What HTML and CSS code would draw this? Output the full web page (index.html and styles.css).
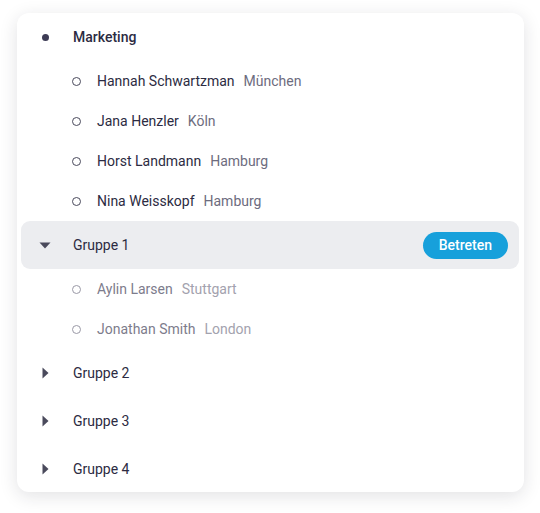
FILE: index.html
```html
<!DOCTYPE html>
<html lang="de">
<head>
  <meta charset="UTF-8">
  <meta name="viewport" content="width=device-width, initial-scale=1.0">
  <title>Gruppen</title>
  <link rel="stylesheet" href="styles.css">
</head>
<body>
  <div class="card">
    <div class="group">
      <span class="icon"><span class="dot"></span></span>
      <span class="group-name bold">Marketing</span>
    </div>
    <div class="person">
      <span class="icon"><span class="ring"></span></span>
      <span class="name">Hannah Schwartzman</span>
      <span class="city">München</span>
    </div>
    <div class="person">
      <span class="icon"><span class="ring"></span></span>
      <span class="name">Jana Henzler</span>
      <span class="city">Köln</span>
    </div>
    <div class="person">
      <span class="icon"><span class="ring"></span></span>
      <span class="name">Horst Landmann</span>
      <span class="city">Hamburg</span>
    </div>
    <div class="person">
      <span class="icon"><span class="ring"></span></span>
      <span class="name">Nina Weisskopf</span>
      <span class="city">Hamburg</span>
    </div>

    <div class="group active">
      <span class="icon">
        <svg width="12" height="8" viewBox="0 0 12 8"><path d="M0.5 1.5h11L6 7.5z" fill="#4a4a5c"/></svg>
      </span>
      <span class="group-name">Gruppe 1</span>
      <button class="join">Betreten</button>
    </div>
    <div class="person muted">
      <span class="icon"><span class="ring"></span></span>
      <span class="name">Aylin Larsen</span>
      <span class="city">Stuttgart</span>
    </div>
    <div class="person muted">
      <span class="icon"><span class="ring"></span></span>
      <span class="name">Jonathan Smith</span>
      <span class="city">London</span>
    </div>

    <div class="group">
      <span class="icon">
        <svg width="8" height="12" viewBox="0 0 8 12"><path d="M1.5 0.5v11L7.5 6z" fill="#4a4a5c"/></svg>
      </span>
      <span class="group-name">Gruppe 2</span>
    </div>
    <div class="group">
      <span class="icon">
        <svg width="8" height="12" viewBox="0 0 8 12"><path d="M1.5 0.5v11L7.5 6z" fill="#4a4a5c"/></svg>
      </span>
      <span class="group-name">Gruppe 3</span>
    </div>
    <div class="group">
      <span class="icon">
        <svg width="8" height="12" viewBox="0 0 8 12"><path d="M1.5 0.5v11L7.5 6z" fill="#4a4a5c"/></svg>
      </span>
      <span class="group-name">Gruppe 4</span>
    </div>
  </div>
</body>
</html>
```

FILE: styles.css
```css
body {
  margin: 0;
  padding: 13px 16px 21px 17px;
  background: #ffffff;
  font-family: Roboto, 'Noto Sans', sans-serif;
  font-size: 14px;
  color: #2c2b42;
}
.card {
  width: 507px;
  height: 479px;
  box-sizing: border-box;
  padding: 0 5px 0 4px;
  background: #ffffff;
  border-radius: 12px;
  box-shadow: 0 4px 18px rgba(30, 30, 50, 0.13);
}
.group {
  display: flex;
  align-items: center;
  height: 48px;
  border-radius: 9px;
}
.group .icon {
  width: 48px;
  margin-right: 4px;
  display: flex;
  justify-content: center;
}
.dot {
  width: 7px;
  height: 7px;
  border-radius: 50%;
  background: #3d3c55;
}
.group-name {
  flex: 1;
}
.bold {
  font-weight: 500;
}
.active {
  background: #ecedf0;
}
.join {
  margin-right: 11px;
  height: 27px;
  padding: 0 16px;
  border: none;
  border-radius: 14px;
  background: #17a0db;
  color: #ffffff;
  font-family: inherit;
  font-size: 14px;
  font-weight: 500;
}
.person {
  display: flex;
  align-items: center;
  height: 40px;
}
.person .icon {
  width: 30px;
  margin-left: 40px;
  display: flex;
  justify-content: center;
  margin-right: 6px;
}
.ring {
  width: 7px;
  height: 7px;
  border: 1.3px solid #4a4a5c;
  border-radius: 50%;
}
.name {
  margin-right: 9px;
}
.city {
  color: #6d6c7e;
}
.muted .name {
  color: #7d7c8c;
}
.muted .city {
  color: #a3a2ae;
}
.muted .ring {
  border-color: #9a99a6;
}
```
